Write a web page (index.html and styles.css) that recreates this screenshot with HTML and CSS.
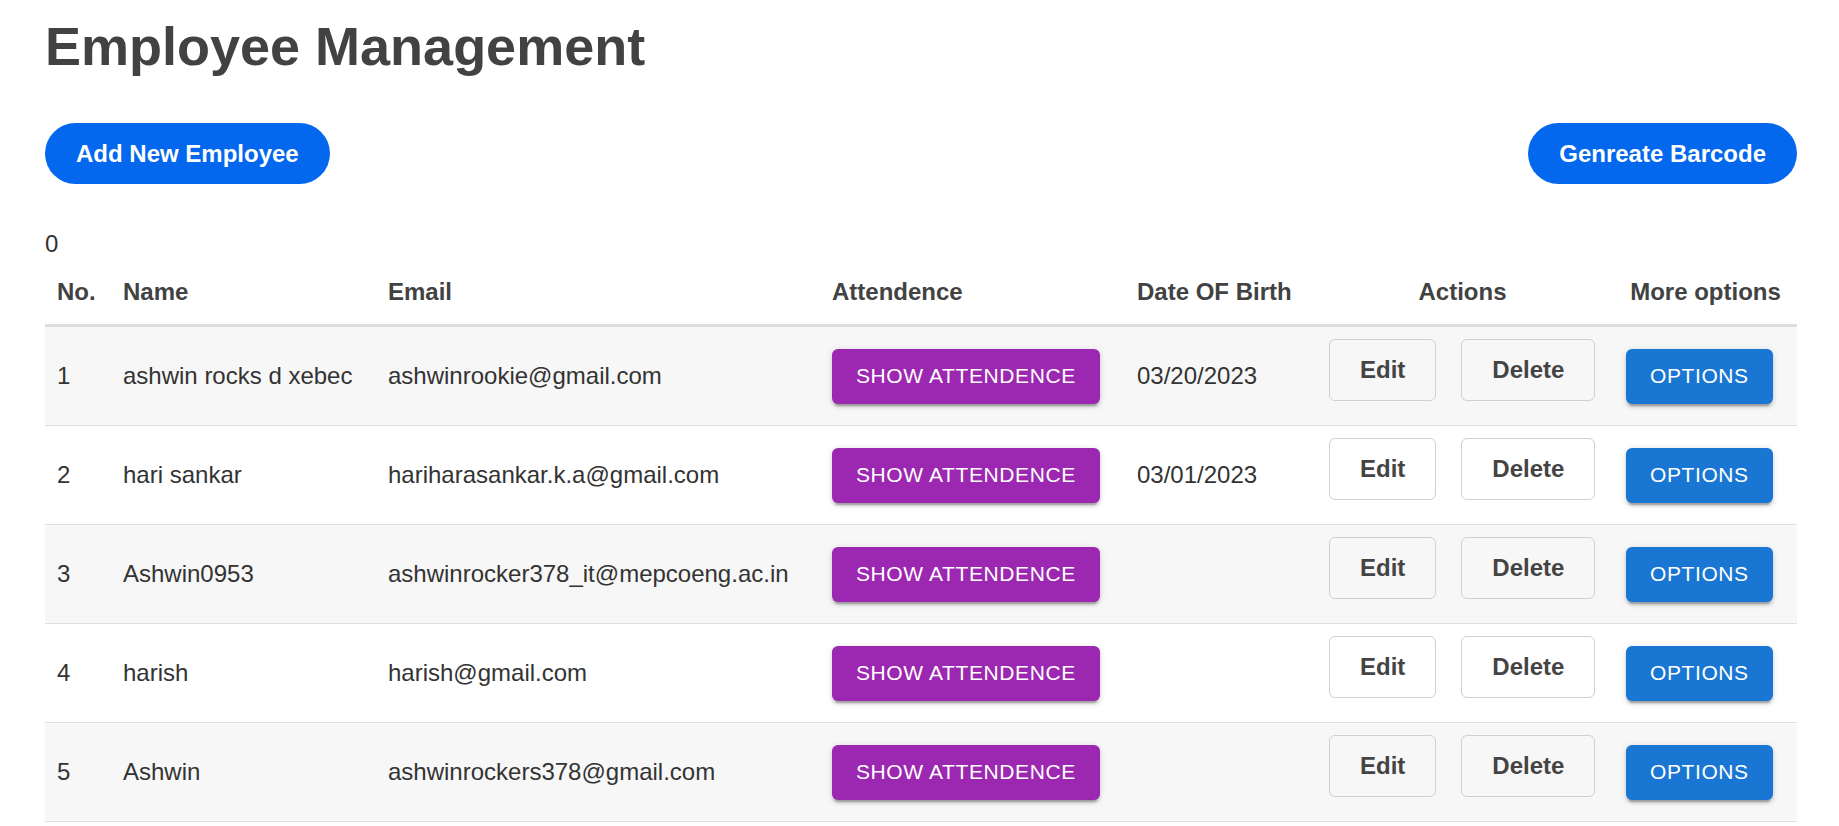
FILE: index.html
```html
<!DOCTYPE html>
<html>
<head>
<meta charset="utf-8">
<title>Employee Management</title>
<link rel="stylesheet" href="styles.css">
</head>
<body>
<div class="page">
  <h1 class="title">Employee Management</h1>
  <div class="toolbar">
    <button class="pill">Add New Employee</button>
    <button class="pill">Genreate Barcode</button>
  </div>
  <div class="count">0</div>
  <table class="emp">
    <colgroup>
      <col class="c-no"><col class="c-name"><col class="c-email"><col class="c-att"><col class="c-dob"><col class="c-act"><col class="c-more">
    </colgroup>
    <thead>
      <tr>
        <th>No.</th><th>Name</th><th>Email</th><th>Attendence</th><th>Date OF Birth</th><th class="center">Actions</th><th class="center">More options</th>
      </tr>
    </thead>
    <tbody>
      <tr>
        <td>1</td><td>ashwin rocks d xebec</td><td>ashwinrookie@gmail.com</td>
        <td><button class="mui purple">SHOW ATTENDENCE</button></td><td>03/20/2023</td>
        <td><div class="actions"><button class="outline">Edit</button><button class="outline">Delete</button></div></td>
        <td><button class="mui blue">OPTIONS</button></td>
      </tr>
      <tr>
        <td>2</td><td>hari sankar</td><td>hariharasankar.k.a@gmail.com</td>
        <td><button class="mui purple">SHOW ATTENDENCE</button></td><td>03/01/2023</td>
        <td><div class="actions"><button class="outline">Edit</button><button class="outline">Delete</button></div></td>
        <td><button class="mui blue">OPTIONS</button></td>
      </tr>
      <tr>
        <td>3</td><td>Ashwin0953</td><td>ashwinrocker378_it@mepcoeng.ac.in</td>
        <td><button class="mui purple">SHOW ATTENDENCE</button></td><td></td>
        <td><div class="actions"><button class="outline">Edit</button><button class="outline">Delete</button></div></td>
        <td><button class="mui blue">OPTIONS</button></td>
      </tr>
      <tr>
        <td>4</td><td>harish</td><td>harish@gmail.com</td>
        <td><button class="mui purple">SHOW ATTENDENCE</button></td><td></td>
        <td><div class="actions"><button class="outline">Edit</button><button class="outline">Delete</button></div></td>
        <td><button class="mui blue">OPTIONS</button></td>
      </tr>
      <tr>
        <td>5</td><td>Ashwin</td><td>ashwinrockers378@gmail.com</td>
        <td><button class="mui purple">SHOW ATTENDENCE</button></td><td></td>
        <td><div class="actions"><button class="outline">Edit</button><button class="outline">Delete</button></div></td>
        <td><button class="mui blue">OPTIONS</button></td>
      </tr>
    </tbody>
  </table>
</div>
</body>
</html>
```

FILE: styles.css
```css
html, body {
  margin: 0;
  padding: 0;
  background: #ffffff;
}
body {
  font-family: "Liberation Sans", Arial, sans-serif;
  font-size: 24px;
  color: #333333;
}
.page {
  padding: 15px 42px 0 45px;
}
.title {
  margin: 0;
  font-size: 54px;
  font-weight: bold;
  line-height: 62px;
  color: #424242;
}
.toolbar {
  display: flex;
  justify-content: space-between;
  align-items: center;
  margin-top: 46px;
}
.pill {
  height: 61px;
  padding: 0 31px;
  border: none;
  border-radius: 31px;
  background: #0468ee;
  color: #ffffff;
  font-family: "Liberation Sans", Arial, sans-serif;
  font-size: 24px;
  font-weight: bold;
  cursor: pointer;
}
.count {
  margin-top: 46px;
  line-height: 27.6px;
  color: #333333;
}
.emp {
  width: 100%;
  margin-top: 2px;
  border-collapse: separate;
  border-spacing: 0;
  table-layout: fixed;
}
.c-no { width: 66px; }
.c-name { width: 265px; }
.c-email { width: 444px; }
.c-att { width: 305px; }
.c-dob { width: 186px; }
.c-act { width: 303px; }
.c-more { width: 183px; }
.emp th {
  padding: 18px 12px 19px;
  text-align: left;
  font-weight: bold;
  line-height: 27.6px;
  color: #424242;
  border-bottom: 3px solid #dddddd;
  white-space: nowrap;
}
.emp th.center {
  text-align: center;
}
.emp td {
  height: 98px;
  padding: 0 12px;
  vertical-align: middle;
  border-bottom: 1px solid #e0e0e0;
  line-height: 27.6px;
  white-space: nowrap;
  color: #333333;
}
.emp tbody tr:nth-child(odd) td {
  background: #f7f7f7;
}
.actions {
  display: flex;
  gap: 25px;
  margin-left: 6px;
  margin-bottom: 12px;
}
.outline {
  padding: 16px 30px;
  border: 1px solid #d0d0d0;
  border-radius: 6px;
  background: transparent;
  font-family: "Liberation Sans", Arial, sans-serif;
  font-size: 24px;
  font-weight: bold;
  line-height: 27.6px;
  color: #444444;
  cursor: pointer;
}
.mui {
  display: inline-block;
  padding: 9px 24px;
  border: none;
  border-radius: 6px;
  font-family: "Liberation Sans", Arial, sans-serif;
  font-size: 21px;
  font-weight: normal;
  line-height: 36.75px;
  letter-spacing: 0.6px;
  color: #ffffff;
  box-shadow: 0 4.5px 1.5px -3px rgba(0,0,0,0.2), 0 3px 3px 0 rgba(0,0,0,0.14), 0 1.5px 7.5px 0 rgba(0,0,0,0.12);
  cursor: pointer;
}
.purple {
  background: #9c27b0;
}
.blue {
  background: #1976d2;
}
```
